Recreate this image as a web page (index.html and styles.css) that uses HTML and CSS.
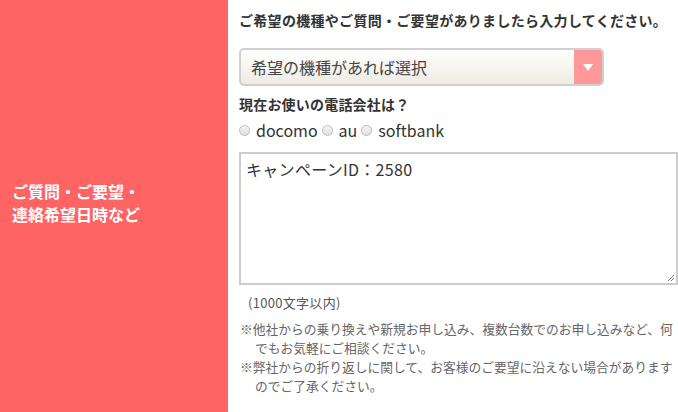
FILE: index.html
```html
<!DOCTYPE html>
<html lang="ja">
<head>
<meta charset="utf-8">
<link rel="stylesheet" href="styles.css">
</head>
<body>
<div class="row">
  <div class="label">
    <p>ご質問・ご要望・<br>連絡希望日時など</p>
  </div>
  <div class="field">
    <p class="lead">ご希望の機種やご質問・ご要望がありましたら入力してください。</p>
    <div class="select">
      <span class="select-text">希望の機種があれば選択</span>
      <span class="select-btn"><svg width="10" height="7" viewBox="0 0 10 7"><path d="M0 0H10L5 7Z" fill="#fff"/></svg></span>
    </div>
    <p class="sub">現在お使いの電話会社は？</p>
    <div class="radios">
      <label class="radio"><span class="dot"></span>docomo</label>
      <label class="radio"><span class="dot"></span>au</label>
      <label class="radio"><span class="dot"></span>softbank</label>
    </div>
    <div class="textarea">
      <span>キャンペーンID：2580</span>
      <svg class="grip" width="8" height="8" viewBox="0 0 8 8"><path d="M7 1L1 7M7 4L4 7" stroke="#777" stroke-width="1"/></svg>
    </div>
    <p class="limit">(1000文字以内)</p>
    <ul class="notes">
      <li>※他社からの乗り換えや新規お申し込み、複数台数でのお申し込みなど、何でもお気軽にご相談ください。</li>
      <li>※弊社からの折り返しに関して、お客様のご要望に沿えない場合がありますのでご了承ください。</li>
    </ul>
  </div>
</div>
</body>
</html>
```
FILE: styles.css
```css
html, body {
  margin: 0;
  padding: 0;
  background: #fff;
}
body {
  font-family: "Noto Sans CJK JP", "Noto Sans", sans-serif;
  color: #333;
  width: 678px;
  height: 412px;
  overflow: hidden;
}
p { margin: 0; }
.row {
  display: flex;
  height: 412px;
}
.label {
  width: 228px;
  flex: none;
  background: #ff6464;
  display: flex;
  align-items: center;
  padding-left: 12px;
  box-sizing: border-box;
}
.label p {
  color: #fff;
  font-weight: bold;
  font-size: 16px;
  line-height: 23px;
  margin-top: -6px;
}
.field {
  flex: 1;
  padding-left: 11px;
  display: flex;
  flex-direction: column;
}
.lead {
  font-size: 14px;
  font-weight: bold;
  line-height: 20px;
  margin-top: 10px;
  letter-spacing: 0.3px;
}
.select {
  margin-top: 18px;
  width: 365px;
  height: 38px;
  box-sizing: border-box;
  border: 2px solid #d0d0d0;
  border-radius: 5px;
  background: linear-gradient(#ffffff, #eeebe2);
  display: flex;
  align-items: center;
  overflow: hidden;
}
.select-text {
  flex: 1;
  font-size: 16px;
  color: #444;
  padding-left: 10px;
  line-height: 20px;
}
.select-btn {
  width: 28px;
  align-self: stretch;
  background: #ff9999;
  display: flex;
  align-items: center;
  justify-content: center;
}
.sub {
  font-size: 14px;
  font-weight: bold;
  line-height: 20px;
  margin-top: 8px;
  letter-spacing: 0.2px;
}
.radios {
  display: flex;
  gap: 4px;
  margin-top: 6px;
  font-size: 16px;
  line-height: 20px;
  color: #333;
}
.radio {
  display: flex;
  align-items: center;
}
.dot {
  width: 11px;
  height: 11px;
  border-radius: 50%;
  border: 1px solid #bbbbbb;
  background: linear-gradient(#f4f4f4, #e0e0e0);
  box-sizing: border-box;
  margin-right: 6px;
}
.textarea {
  margin-top: 12px;
  width: 439px;
  height: 133px;
  box-sizing: border-box;
  border: 2px solid #cccccc;
  padding: 4px 5px;
  font-size: 16px;
  line-height: 22px;
  position: relative;
  letter-spacing: 0.3px;
}
.grip {
  position: absolute;
  right: 1px;
  bottom: 1px;
}
.limit {
  font-size: 13px;
  color: #555;
  line-height: 18px;
  margin-top: 9px;
  padding-left: 9px;
  letter-spacing: 0.3px;
}
.notes {
  list-style: none;
  margin: 7px 0 0;
  padding: 0;
  font-size: 12.75px;
  color: #666;
  line-height: 19px;
}
.notes li {
  padding-left: 16px;
  text-indent: -15px;
}
```
